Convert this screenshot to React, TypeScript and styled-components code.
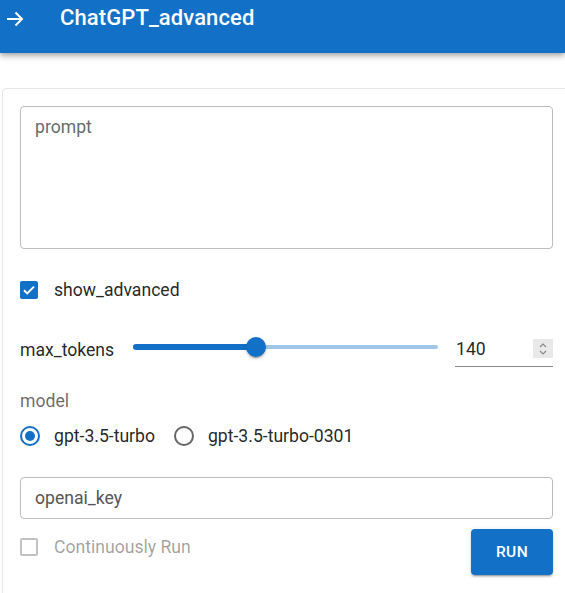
import styled, {createGlobalStyle} from "styled-components";

const BLUE = '#1270c7';

const GlobalStyle = createGlobalStyle`
    html, body {
        margin: 0;
        padding: 0;
        background: #fff;
        overflow: hidden;
    }

    body {
        font-family: Roboto, "Liberation Sans", sans-serif;
        color: rgba(0, 0, 0, 0.87);
    }

    * {
        box-sizing: border-box;
    }
`

const SHeader = styled.header`
    height: 53px;
    background: ${BLUE};
    display: flex;
    align-items: flex-start;
    padding: 6px 0 0 6px;
    box-shadow: 0 2px 4px -1px rgba(0, 0, 0, 0.2), 0 4px 5px 0 rgba(0, 0, 0, 0.14), 0 1px 10px 0 rgba(0, 0, 0, 0.12);
    position: relative;
    z-index: 2;
`

const SArrow = styled.svg`
    width: 18px;
    height: 16px;
    margin-top: 5px;
    flex-shrink: 0;
`

const STitle = styled.h1`
    margin: 0 0 0 36px;
    font-size: 22px;
    font-weight: 500;
    line-height: 24px;
    color: #fff;
    letter-spacing: 0.1px;
`

const SMain = styled.main`
    padding: 35px 0 0 2px;
`

const SCard = styled.section`
    width: 580px;
    border: 1px solid #e6e6e6;
    border-radius: 4px;
    padding: 17px 0 40px 17px;
`

const SColumn = styled.div`
    width: 533px;
    display: flex;
    flex-direction: column;
    font-size: 17.6px;
`

const STextArea = styled.textarea`
    height: 143px;
    width: 100%;
    resize: none;
    border: 1px solid #bdbdbd;
    border-radius: 4px;
    padding: 9px 14px;
    font-family: inherit;
    font-size: 17.6px;
    line-height: 23px;
    color: rgba(0, 0, 0, 0.87);
    outline: none;

    &::placeholder {
        color: #6a6a6a;
        opacity: 1;
    }
`

const SCheckRow = styled.label<{ $marginTop: number }>`
    display: flex;
    align-items: center;
    gap: 16px;
    margin-top: ${({$marginTop}) => $marginTop}px;
    height: 18px;
    line-height: 24px;
    cursor: pointer;
`

const SBox = styled.span<{ $checked?: boolean }>`
    width: 18px;
    height: 18px;
    border-radius: 2px;
    flex-shrink: 0;
    display: flex;
    align-items: center;
    justify-content: center;
    background: ${({$checked}) => $checked ? BLUE : 'transparent'};
    border: ${({$checked}) => $checked ? 'none' : '2px solid #c2c2c2'};
`

const SCheckLabel = styled.span<{ $muted?: boolean }>`
    color: ${({$muted}) => $muted ? 'rgba(0, 0, 0, 0.38)' : 'rgba(0, 0, 0, 0.87)'};
`

const SSliderRow = styled.div`
    display: flex;
    align-items: flex-start;
    height: 31px;
    margin-top: 37px;
`

const SSliderLabel = styled.span`
    width: 113px;
    line-height: 24px;
    flex-shrink: 0;
    margin-top: 2px;
`

const STrack = styled.div`
    position: relative;
    width: 305px;
    height: 20px;
    flex-shrink: 0;
    margin-top: 1px;
`

const SRail = styled.div`
    position: absolute;
    left: 0;
    right: 0;
    top: 8px;
    height: 4px;
    border-radius: 2px;
    background: ${BLUE};
    opacity: 0.4;
`

const SFill = styled.div`
    position: absolute;
    left: 0;
    top: 7px;
    height: 6px;
    border-radius: 3px;
    background: ${BLUE};
`

const SThumb = styled.div`
    position: absolute;
    top: 0;
    width: 20px;
    height: 20px;
    margin-left: -10px;
    border-radius: 50%;
    background: ${BLUE};
    box-shadow: 0 3px 1px -2px rgba(0, 0, 0, 0.2), 0 2px 2px 0 rgba(0, 0, 0, 0.14), 0 1px 5px 0 rgba(0, 0, 0, 0.12);
`

const SNumber = styled.div`
    margin-left: 17px;
    width: 98px;
    height: 31px;
    display: flex;
    align-items: flex-start;
    justify-content: space-between;
    border-bottom: 1px solid #8a8a8a;
    padding: 1px 0 0 1px;
    line-height: 24px;
`

const SSpinner = styled.span`
    width: 20px;
    height: 19px;
    margin-top: 2px;
    background: #e9e9e9;
    display: flex;
    align-items: center;
    justify-content: center;
`

const SGroupLabel = styled.div`
    margin-top: 22px;
    line-height: 24px;
    color: rgba(0, 0, 0, 0.6);
`

const SRadioRow = styled.div`
    display: flex;
    align-items: center;
    gap: 19px;
    margin-top: 13px;
    height: 20px;
`

const SRadio = styled.label`
    display: flex;
    align-items: center;
    gap: 14px;
    line-height: 24px;
    cursor: pointer;
`

const SRadioCircle = styled.span<{ $checked?: boolean }>`
    width: 20px;
    height: 20px;
    border-radius: 50%;
    border: 2px solid ${({$checked}) => $checked ? BLUE : '#666'};
    display: flex;
    align-items: center;
    justify-content: center;

    &::after {
        content: '';
        width: 10px;
        height: 10px;
        border-radius: 50%;
        background: ${BLUE};
        display: ${({$checked}) => $checked ? 'block' : 'none'};
    }
`

const SInput = styled.input`
    margin-top: 31px;
    height: 42px;
    width: 100%;
    border: 1px solid #bdbdbd;
    border-radius: 4px;
    padding: 0 14px;
    font-family: inherit;
    font-size: 17.6px;
    outline: none;

    &::placeholder {
        color: #555;
        opacity: 1;
    }
`

const SFooter = styled.div`
    margin-top: 10px;
    display: flex;
    justify-content: space-between;
    align-items: flex-start;
`

const SButton = styled.button`
    width: 82px;
    height: 46px;
    border: none;
    border-radius: 4px;
    background: ${BLUE};
    color: #fff;
    font-family: inherit;
    font-size: 15.5px;
    font-weight: 500;
    letter-spacing: 0.4px;
    cursor: pointer;
    box-shadow: 0 3px 1px -2px rgba(0, 0, 0, 0.2), 0 2px 2px 0 rgba(0, 0, 0, 0.14), 0 1px 5px 0 rgba(0, 0, 0, 0.12);
`

const Check = () => (
    <svg width="14" height="14" viewBox="0 0 14 14">
        <path d="M2 7.2l3.2 3.2L12 3.6" fill="none" stroke="#fff" strokeWidth="2"/>
    </svg>
)

export default function App() {
    const value = 40.3;

    return (<>
        <GlobalStyle/>
        <SHeader>
            <SArrow viewBox="0 0 18 16">
                <path d="M1 8h15M9.5 1.5L16 8l-6.5 6.5" fill="none" stroke="#fff" strokeWidth="2"/>
            </SArrow>
            <STitle>ChatGPT_advanced</STitle>
        </SHeader>
        <SMain>
            <SCard>
                <SColumn>
                    <STextArea placeholder="prompt"/>

                    <SCheckRow $marginTop={32}>
                        <SBox $checked><Check/></SBox>
                        <SCheckLabel>show_advanced</SCheckLabel>
                    </SCheckRow>

                    <SSliderRow>
                        <SSliderLabel>max_tokens</SSliderLabel>
                        <STrack>
                            <SRail/>
                            <SFill style={{width: `${value}%`}}/>
                            <SThumb style={{left: `${value}%`}}/>
                        </STrack>
                        <SNumber>
                            <span>140</span>
                            <SSpinner>
                                <svg width="10" height="14" viewBox="0 0 10 14">
                                    <path d="M2 5l3-3 3 3M2 9l3 3 3-3" fill="none" stroke="#888" strokeWidth="1.2"/>
                                </svg>
                            </SSpinner>
                        </SNumber>
                    </SSliderRow>

                    <SGroupLabel>model</SGroupLabel>
                    <SRadioRow>
                        <SRadio><SRadioCircle $checked/>gpt-3.5-turbo</SRadio>
                        <SRadio><SRadioCircle/>gpt-3.5-turbo-0301</SRadio>
                    </SRadioRow>

                    <SInput placeholder="openai_key"/>

                    <SFooter>
                        <SCheckRow $marginTop={9}>
                            <SBox/>
                            <SCheckLabel $muted>Continuously Run</SCheckLabel>
                        </SCheckRow>
                        <SButton>RUN</SButton>
                    </SFooter>
                </SColumn>
            </SCard>
        </SMain>
    </>)
}
